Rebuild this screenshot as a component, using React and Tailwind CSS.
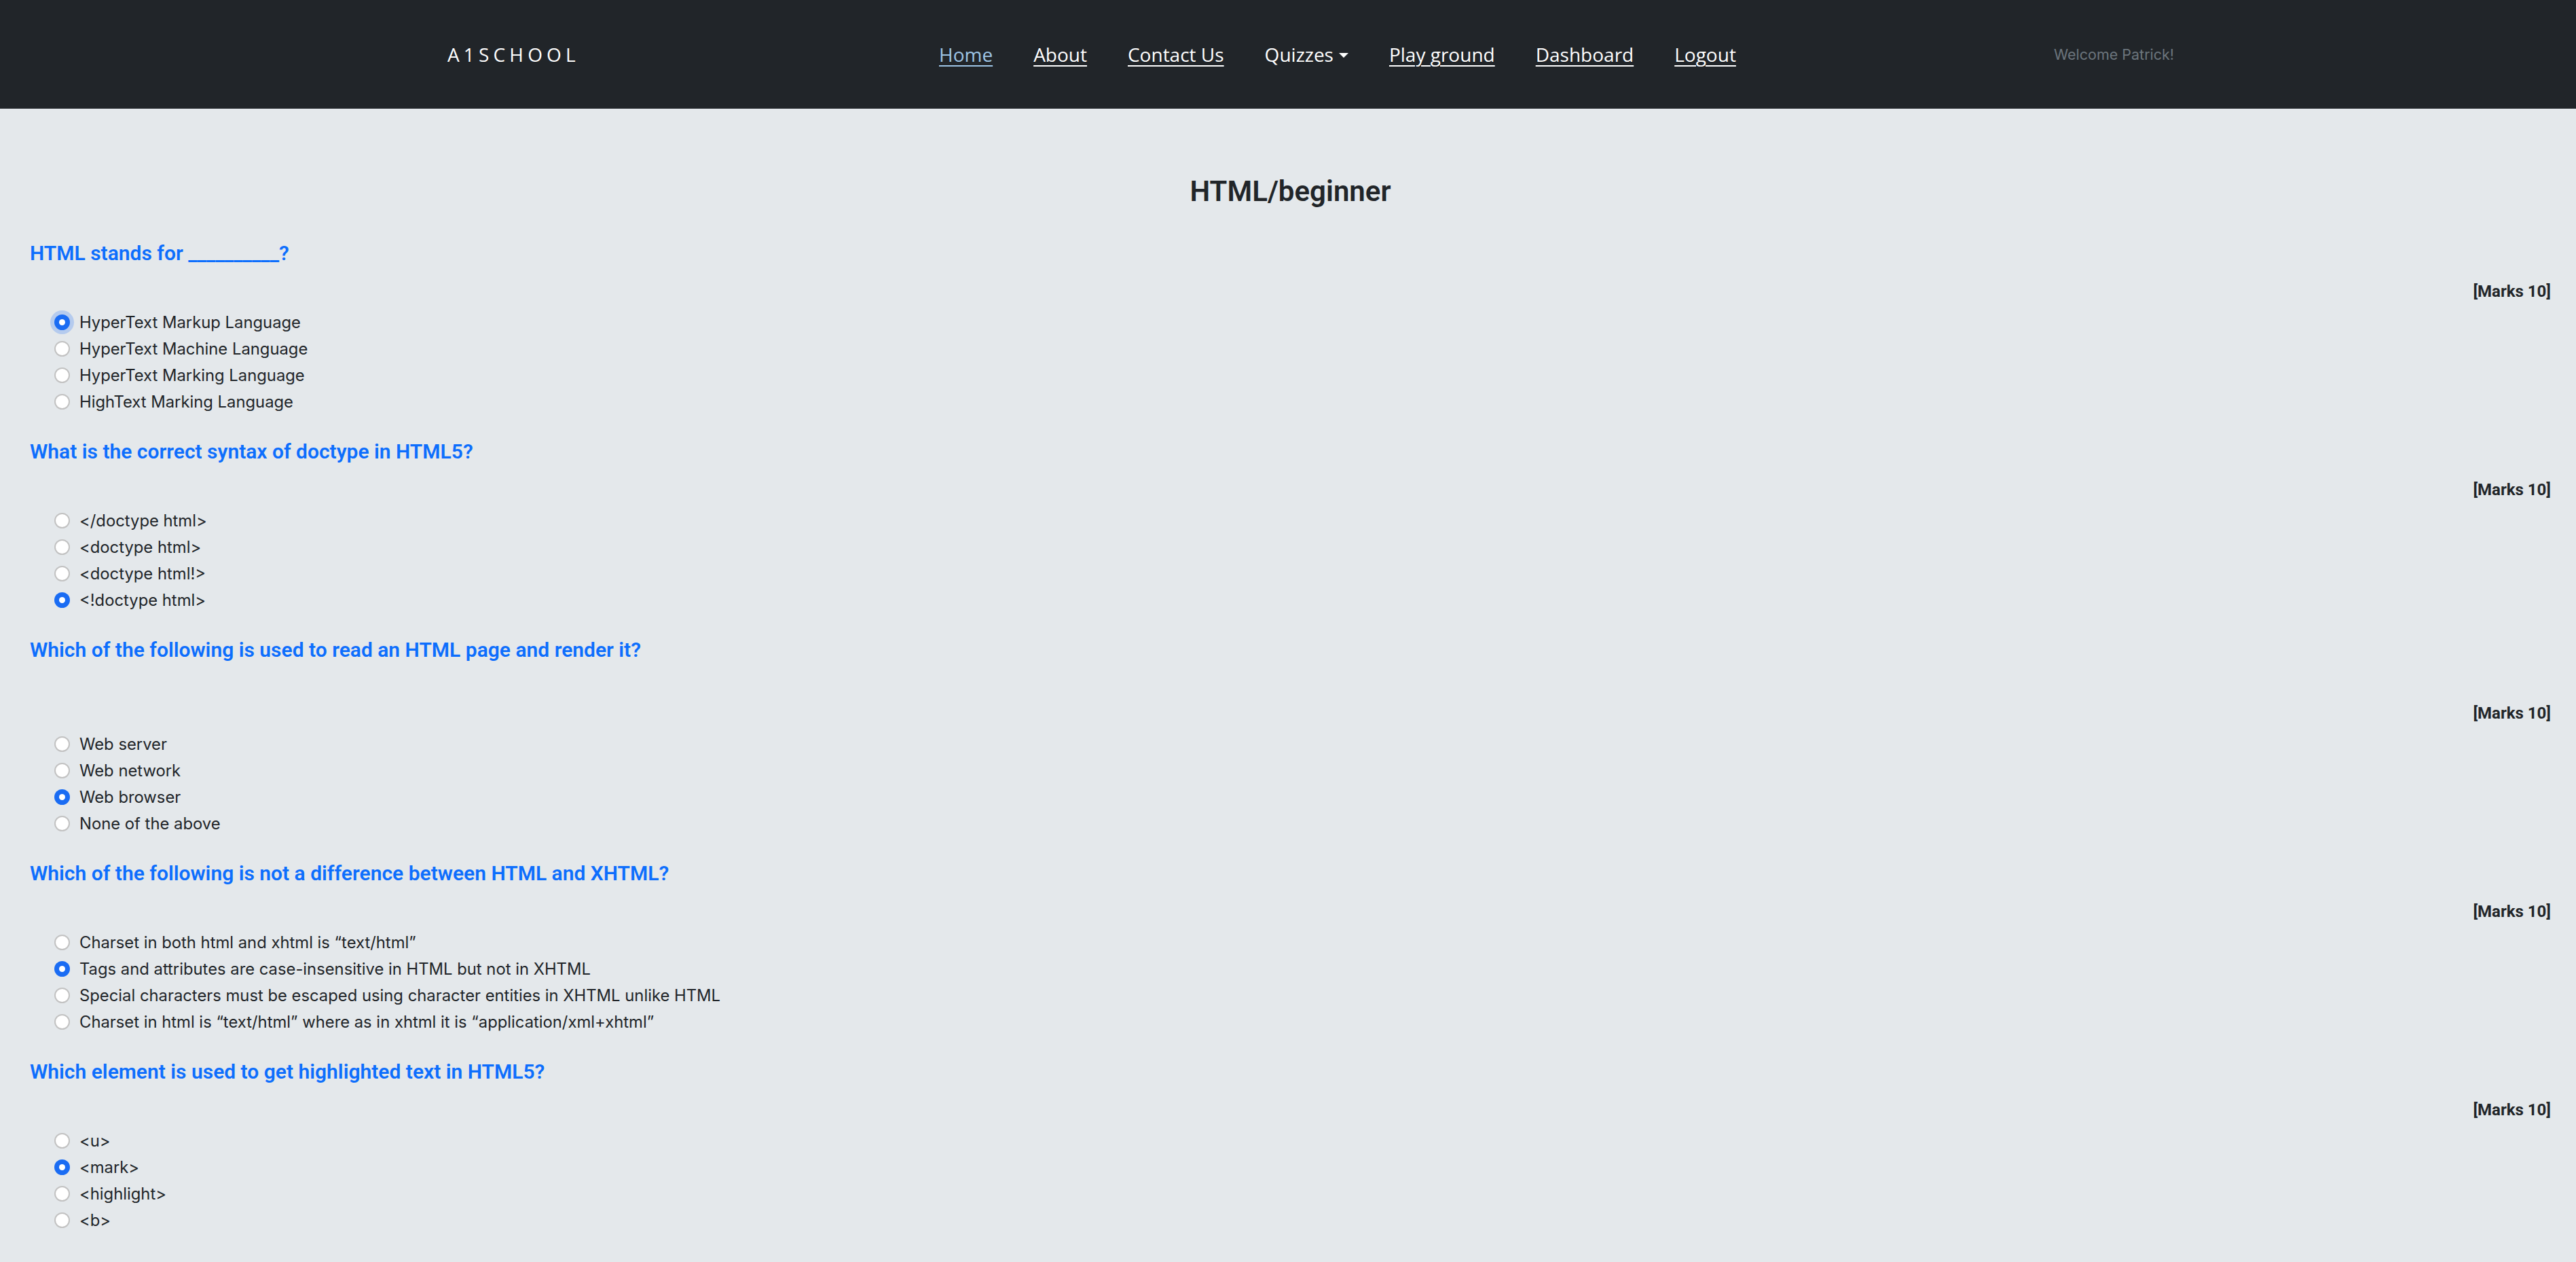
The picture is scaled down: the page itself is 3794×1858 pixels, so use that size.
import React, { useState } from "react";

const questions = [
  {
    id: 1,
    text: "HTML stands for __________?",
    options: [
      "HyperText Markup Language",
      "HyperText Machine Language",
      "HyperText Marking Language",
      "HighText Marking Language",
    ],
    picked: 0,
  },
  {
    id: 2,
    text: "What is the correct syntax of doctype in HTML5?",
    options: ["</doctype html>", "<doctype html>", "<doctype html!>", "<!doctype html>"],
    picked: 3,
  },
  {
    id: 3,
    text: "Which of the following is used to read an HTML page and render it?",
    options: ["Web server", "Web network", "Web browser", "None of the above"],
    picked: 2,
    extraGap: true,
  },
  {
    id: 4,
    text: "Which of the following is not a difference between HTML and XHTML?",
    options: [
      "Charset in both html and xhtml is “text/html”",
      "Tags and attributes are case-insensitive in HTML but not in XHTML",
      "Special characters must be escaped using character entities in XHTML unlike HTML",
      "Charset in html is “text/html” where as in xhtml it is “application/xml+xhtml”",
    ],
    picked: 1,
  },
  {
    id: 5,
    text: "Which element is used to get highlighted text in HTML5?",
    options: ["<u>", "<mark>", "<highlight>", "<b>"],
    picked: 1,
  },
];

const links = ["Home", "About", "Contact Us", "Quizzes", "Play ground", "Dashboard", "Logout"];

const Radio = ({ checked, focused }) => (
  <span
    className={`flex h-[23px] w-[23px] shrink-0 items-center justify-center rounded-full ${
      checked ? "bg-[#1a6cf3]" : "border-2 border-[#c2c2c2] bg-white"
    } ${focused ? "ring-[6px] ring-[#b5cbee]" : ""}`}
  >
    {checked && <span className="h-[9px] w-[9px] rounded-full bg-white" />}
  </span>
);

const Navbar = () => (
  <nav className="flex h-[160px] items-center bg-[#212529] pl-[659px] font-['Open_Sans',sans-serif]">
    <div className="w-[724px] text-[28px] tracking-[0.22em] text-white">A1SCHOOL</div>
    <ul className="flex items-center gap-[60px] text-[28px]">
      {links.map((l, i) =>
        l === "Quizzes" ? (
          <li key={l} className="flex items-center gap-[8px] text-white">
            {l}
            <span className="mt-[2px] h-0 w-0 border-x-[7px] border-t-[7px] border-x-transparent border-t-white" />
          </li>
        ) : (
          <li
            key={l}
            className={`underline underline-offset-[5px] decoration-2 ${i === 0 ? "text-[#9ec5e6]" : "text-white"}`}
          >
            {l}
          </li>
        )
      )}
    </ul>
    <div className="ml-[468px] font-['Inter',sans-serif] text-[21.5px] text-[#6c757d]">Welcome Patrick!</div>
  </nav>
);

const Question = ({ q }) => {
  const [picked, setPicked] = useState(q.picked);
  return (
    <div className="mb-[34px]">
      <h5 className="h-[40px] font-['Roboto',sans-serif] text-[30px] font-semibold leading-[40px] text-[#0d6efd]">
        {q.text}
      </h5>
      <div
        className={`h-[30px] text-right font-['Roboto',sans-serif] text-[24px] font-bold leading-[30px] text-[#212529] ${
          q.extraGap ? "mt-[58px]" : "mt-[21px]"
        }`}
      >
        [Marks 10]
      </div>
      <div className="mt-[11px] flex flex-col">
        {q.options.map((opt, i) => (
          <label
            key={i}
            onClick={() => setPicked(i)}
            className="flex h-[39px] cursor-pointer items-center gap-[14px] pl-[36px] font-['Inter',sans-serif] text-[23.8px] text-[#212529]"
          >
            <Radio checked={picked === i} focused={q.id === 1 && picked === i} />
            <span>{opt}</span>
          </label>
        ))}
      </div>
    </div>
  );
};

export default function App() {
  return (
    <div className="min-h-screen bg-[#e4e8eb]">
      <Navbar />
      <main className="pl-[44px] pr-[37px] pt-[95px]">
        <h3 className="mb-[44px] h-[54px] text-center font-['Roboto',sans-serif] text-[42px] font-semibold leading-[54px] text-[#212529]">
          HTML/beginner
        </h3>
        {questions.map((q) => (
          <Question key={q.id} q={q} />
        ))}
      </main>
    </div>
  );
}
